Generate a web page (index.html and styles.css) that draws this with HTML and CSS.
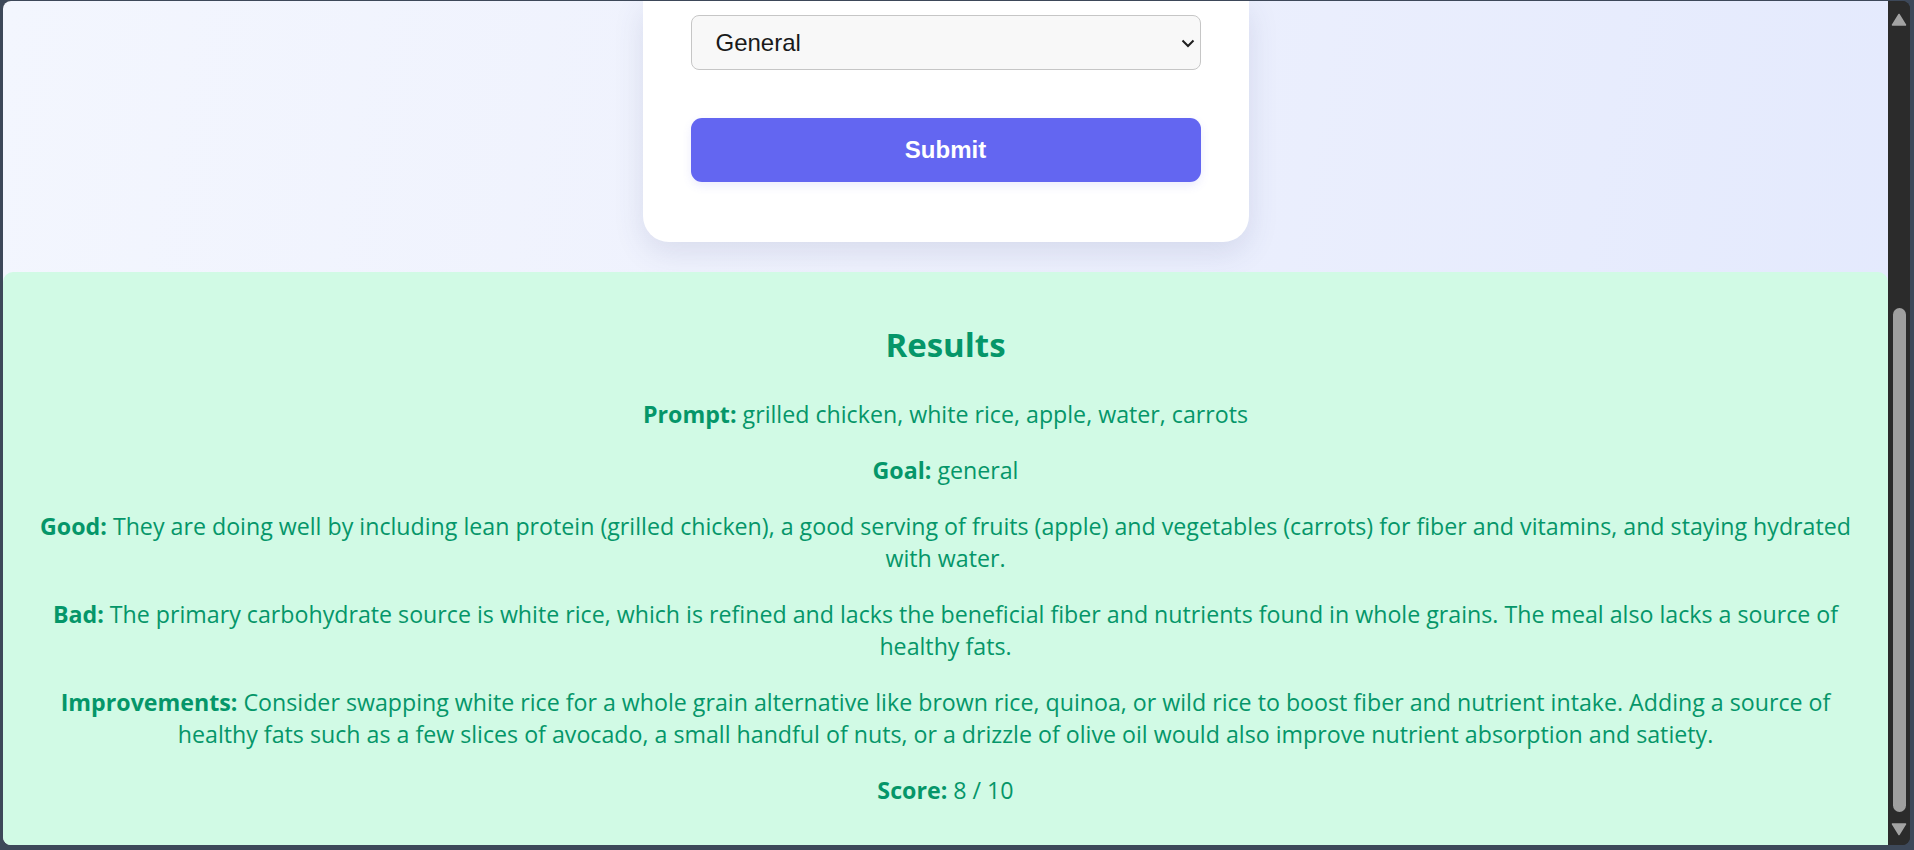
FILE: index.html
```html
<!DOCTYPE html>
<html lang="en">
<head>
<meta charset="utf-8">
<title>Meal Analyzer</title>
<link rel="stylesheet" href="styles.css">
</head>
<body>
  <div class="window">
    <div class="viewport">
      <section class="form-area">
        <form class="card">
          <div class="select-wrap">
            <select class="goal-select" name="goal">
              <option>General</option>
            </select>
            <svg class="chevron" width="14" height="9" viewBox="0 0 14 9" aria-hidden="true">
              <path d="M1.5 1.5 L7 7 L12.5 1.5" fill="none" stroke="#1f1f1f" stroke-width="2"/>
            </svg>
          </div>
          <button class="submit" type="button">Submit</button>
        </form>
      </section>
      <section class="results">
        <h2 class="results-title">Results</h2>
        <p><strong>Prompt:</strong> grilled chicken, white rice, apple, water, carrots</p>
        <p><strong>Goal:</strong> general</p>
        <p><strong>Good:</strong> They are doing well by including lean protein (grilled chicken), a good serving of fruits (apple) and vegetables (carrots) for fiber and vitamins, and staying hydrated with water.</p>
        <p><strong>Bad:</strong> The primary carbohydrate source is white rice, which is refined and lacks the beneficial fiber and nutrients found in whole grains. The meal also lacks a source of healthy fats.</p>
        <p><strong>Improvements:</strong> Consider swapping white rice for a whole grain alternative like brown rice, quinoa, or wild rice to boost fiber and nutrient intake. Adding a source of healthy fats such as a few slices of avocado, a small handful of nuts, or a drizzle of olive oil would also improve nutrient absorption and satiety.</p>
        <p><strong>Score:</strong> 8 / 10</p>
      </section>
    </div>
    <div class="scrollbar">
      <svg class="arrow" width="16" height="14" viewBox="0 0 16 14" aria-hidden="true">
        <path d="M8 1.5 L14.5 12 L1.5 12 Z" fill="#a3a3a3" stroke="#a3a3a3" stroke-width="1.5" stroke-linejoin="round"/>
      </svg>
      <div class="track"><div class="thumb"></div></div>
      <svg class="arrow" width="16" height="14" viewBox="0 0 16 14" aria-hidden="true">
        <path d="M1.5 2 L14.5 2 L8 12.5 Z" fill="#a3a3a3" stroke="#a3a3a3" stroke-width="1.5" stroke-linejoin="round"/>
      </svg>
    </div>
  </div>
</body>
</html>
```
FILE: styles.css
```css
* { box-sizing: border-box; }

html, body { height: 100%; }

body {
  margin: 0;
  padding: 1px 4px 5px 3px;
  background: #3d4859;
  overflow: hidden;
}

.window {
  display: flex;
  height: 844px;
  border-radius: 8px;
  overflow: hidden;
  background: #2b2b2b;
}

.viewport {
  flex: 1;
  display: flex;
  flex-direction: column;
  background: linear-gradient(100deg, #f3f6fe 0%, #eef1fd 45%, #e3e9fd 100%);
  font-family: "Open Sans", "Noto Sans", sans-serif;
}

/* ---------- form card ---------- */
.form-area {
  display: flex;
  justify-content: center;
  padding-bottom: 30px;
}

.card {
  width: 606px;
  margin: 0;
  padding: 14px 48px 60px;
  background: #ffffff;
  border-radius: 0 0 26px 26px;
  box-shadow: 0 10px 30px rgba(60, 70, 120, 0.13);
  display: flex;
  flex-direction: column;
  gap: 48px;
}

.select-wrap {
  position: relative;
}

.goal-select {
  appearance: none;
  -webkit-appearance: none;
  display: block;
  width: 100%;
  height: 55px;
  padding: 0 40px 0 24px;
  border: 1px solid #c6c6c6;
  border-radius: 8px;
  background: #f8f8f8;
  color: #1a1a1a;
  font-family: "Liberation Sans", Arial, sans-serif;
  font-size: 24px;
}

.chevron {
  position: absolute;
  right: 6px;
  top: 24px;
  pointer-events: none;
}

.submit {
  height: 64px;
  border: none;
  border-radius: 11px;
  background: #6366f1;
  color: #ffffff;
  font-family: "Liberation Sans", Arial, sans-serif;
  font-weight: 700;
  font-size: 24px;
  box-shadow: 0 4px 10px rgba(99, 102, 241, 0.12);
  cursor: pointer;
}

/* ---------- results ---------- */
.results {
  flex: 1;
  background: #d1fae5;
  border-radius: 10px 10px 0 0;
  padding: 20px 25px 0;
  color: #059669;
  text-align: center;
  font-size: 23.2px;
  line-height: 32px;
}

.results-title {
  margin: 33px 0 33px;
  font-size: 33px;
  line-height: 40px;
  font-weight: 700;
}

.results p {
  margin: 0 0 24px;
}

.results strong {
  font-weight: 700;
}

/* ---------- scrollbar ---------- */
.scrollbar {
  width: 22px;
  display: flex;
  flex-direction: column;
  align-items: center;
  padding: 12px 0 9px;
  background: #2b2b2b;
}

.arrow { display: block; flex: none; }

.track {
  flex: 1;
  width: 100%;
  display: flex;
  flex-direction: column;
  justify-content: flex-end;
  align-items: center;
  padding: 0 0 10px;
}

.thumb {
  width: 13px;
  height: 504px;
  border-radius: 7px;
  background: #9f9f9f;
}
```
